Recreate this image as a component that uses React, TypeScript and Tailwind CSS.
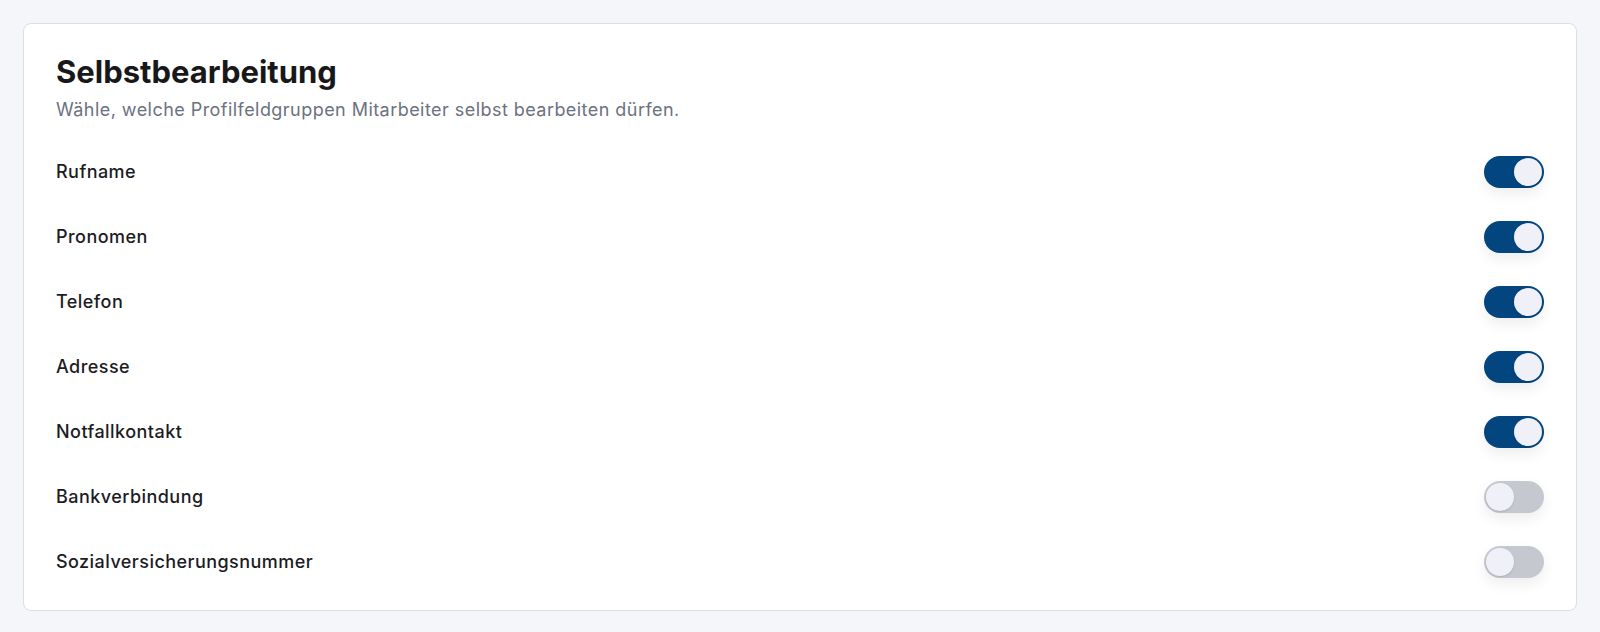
import React, { useState } from "react";

const FIELDS = [
  { key: "rufname", label: "Rufname", on: true },
  { key: "pronomen", label: "Pronomen", on: true },
  { key: "telefon", label: "Telefon", on: true },
  { key: "adresse", label: "Adresse", on: true },
  { key: "notfall", label: "Notfallkontakt", on: true },
  { key: "bank", label: "Bankverbindung", on: false },
  { key: "sv", label: "Sozialversicherungsnummer", on: false },
];

const Toggle = ({ checked, onChange }: { checked: boolean; onChange: () => void }) => (
  <button
    type="button"
    role="switch"
    aria-checked={checked}
    onClick={onChange}
    className={
      "flex h-8 w-[60px] shrink-0 items-center rounded-full p-0.5 shadow-[0_6px_14px_rgba(0,0,0,0.07)] " +
      (checked ? "justify-end bg-[#03457f]" : "justify-start bg-[#c5c8cf]")
    }
  >
    <span className="block h-7 w-7 rounded-full bg-[#eff0f8] shadow-[0_1px_2px_rgba(0,0,0,0.12)]" />
  </button>
);

const App = () => {
  const [values, setValues] = useState<Record<string, boolean>>(
    Object.fromEntries(FIELDS.map((f) => [f.key, f.on]))
  );

  return (
    <div
      className="min-h-screen bg-[#f5f6fa] p-[23px]"
      style={{ fontFamily: "Inter, 'Noto Sans', sans-serif" }}
    >
      <div className="rounded-lg border border-[#dcdee3] bg-white p-8">
        <h1 className="text-[31px] leading-none font-bold text-[#18181b]">
          Selbstbearbeitung
        </h1>
        <p className="mt-[9px] text-lg tracking-[0.025em] text-[#6b7280]">
          Wähle, welche Profilfeldgruppen Mitarbeiter selbst bearbeiten dürfen.
        </p>
        <div className="mt-8 flex flex-col gap-[33px]">
          {FIELDS.map((f) => (
            <div key={f.key} className="flex items-center justify-between">
              <span className="text-lg font-medium tracking-[0.025em] text-[#1c1c1f]">
                {f.label}
              </span>
              <Toggle
                checked={values[f.key]}
                onChange={() => setValues((v) => ({ ...v, [f.key]: !v[f.key] }))}
              />
            </div>
          ))}
        </div>
      </div>
    </div>
  );
};

export default App;
